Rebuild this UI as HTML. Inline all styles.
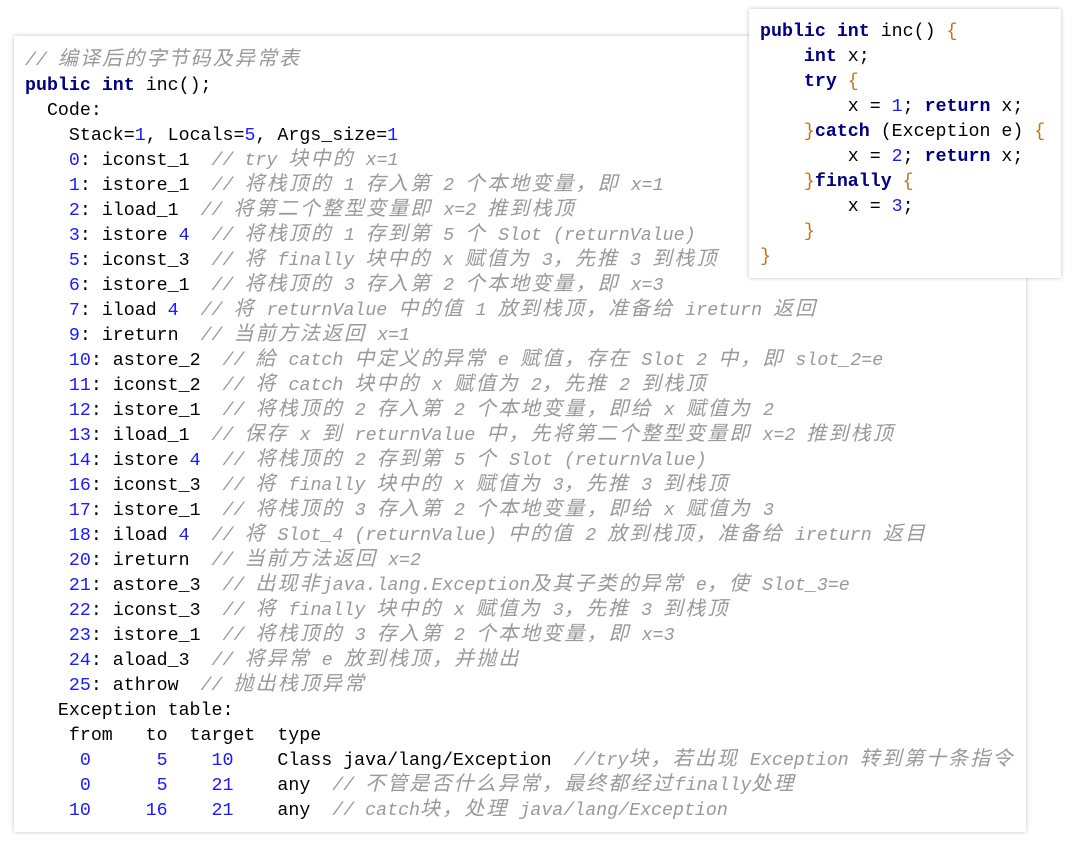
<!DOCTYPE html>
<html><head><meta charset="utf-8"><style>
body{margin:0;width:1080px;height:841px;background:#fff;overflow:hidden;position:relative;font-family:"Liberation Mono","Noto Sans CJK SC",monospace;}
.box{position:absolute;background:#fff;box-shadow:0 0 4px rgba(0,0,0,0.25);}
pre{margin:0;font-family:"Liberation Mono","Noto Sans CJK SC",monospace;font-size:18.3px;line-height:25px;color:#000;white-space:pre;}
.c{color:#999;font-style:italic;}
.z{font-size:20px;letter-spacing:2.1px;line-height:20px;}
.n{color:#1a1aff;}
.k{color:#000080;font-weight:bold;}
.b{color:#b8771f;}
</style></head><body>
<div class="box" style="left:14px;top:36px;width:1012px;height:796px;">
<pre style="position:absolute;left:11px;top:13px;"><span class="c">// 编译后的字节码及异常表</span>
<span class="k">public</span> <span class="k">int</span> inc();
  Code:
    Stack=<span class="n">1</span>, Locals=<span class="n">5</span>, Args_size=<span class="n">1</span>
    <span class="n">0</span>: iconst_1  <span class="c">// try 块中的 x=1</span>
    <span class="n">1</span>: istore_1  <span class="c">// 将栈顶的 1 存入第 2 个本地变量，即 x=1</span>
    <span class="n">2</span>: iload_1  <span class="c">// 将第二个整型变量即 x=2 推到栈顶</span>
    <span class="n">3</span>: istore <span class="n">4</span>  <span class="c">// 将栈顶的 1 存到第 5 个 Slot (returnValue)</span>
    <span class="n">5</span>: iconst_3  <span class="c">// 将 finally 块中的 x 赋值为 3，先推 3 到栈顶</span>
    <span class="n">6</span>: istore_1  <span class="c">// 将栈顶的 3 存入第 2 个本地变量，即 x=3</span>
    <span class="n">7</span>: iload <span class="n">4</span>  <span class="c">// 将 returnValue 中的值 1 放到栈顶，准备给 ireturn 返回</span>
    <span class="n">9</span>: ireturn  <span class="c">// 当前方法返回 x=1</span>
    <span class="n">10</span>: astore_2  <span class="c">// 給 catch 中定义的异常 e 赋值，存在 Slot 2 中，即 slot_2=e</span>
    <span class="n">11</span>: iconst_2  <span class="c">// 将 catch 块中的 x 赋值为 2，先推 2 到栈顶</span>
    <span class="n">12</span>: istore_1  <span class="c">// 将栈顶的 2 存入第 2 个本地变量，即给 x 赋值为 2</span>
    <span class="n">13</span>: iload_1  <span class="c">// 保存 x 到 returnValue 中，先将第二个整型变量即 x=2 推到栈顶</span>
    <span class="n">14</span>: istore <span class="n">4</span>  <span class="c">// 将栈顶的 2 存到第 5 个 Slot (returnValue)</span>
    <span class="n">16</span>: iconst_3  <span class="c">// 将 finally 块中的 x 赋值为 3，先推 3 到栈顶</span>
    <span class="n">17</span>: istore_1  <span class="c">// 将栈顶的 3 存入第 2 个本地变量，即给 x 赋值为 3</span>
    <span class="n">18</span>: iload <span class="n">4</span>  <span class="c">// 将 Slot_4 (returnValue) 中的值 2 放到栈顶，准备给 ireturn 返目</span>
    <span class="n">20</span>: ireturn  <span class="c">// 当前方法返回 x=2</span>
    <span class="n">21</span>: astore_3  <span class="c">// 出现非java.lang.Exception及其子类的异常 e，使 Slot_3=e</span>
    <span class="n">22</span>: iconst_3  <span class="c">// 将 finally 块中的 x 赋值为 3，先推 3 到栈顶</span>
    <span class="n">23</span>: istore_1  <span class="c">// 将栈顶的 3 存入第 2 个本地变量，即 x=3</span>
    <span class="n">24</span>: aload_3  <span class="c">// 将异常 e 放到栈顶，并抛出</span>
    <span class="n">25</span>: athrow  <span class="c">// 抛出栈顶异常</span>
   Exception table:
    from   to  target  type
     <span class="n">0</span>      <span class="n">5</span>    <span class="n">10</span>    Class java/lang/Exception  <span class="c">//try块，若出现 Exception 转到第十条指令</span>
     <span class="n">0</span>      <span class="n">5</span>    <span class="n">21</span>    any  <span class="c">// 不管是否什么异常，最终都经过finally处理</span>
    <span class="n">10</span>     <span class="n">16</span>    <span class="n">21</span>    any  <span class="c">// catch块，处理 java/lang/Exception</span></pre>
</div>
<div class="box" style="left:749px;top:9px;width:312px;height:269px;">
<pre style="position:absolute;left:11px;top:11px;"><span class="k">public</span> <span class="k">int</span> inc() <span class="b">{</span>
    <span class="k">int</span> x;
    <span class="k">try</span> <span class="b">{</span>
        x = <span class="n">1</span>; <span class="k">return</span> x;
    <span class="b">}</span><span class="k">catch</span> (Exception e) <span class="b">{</span>
        x = <span class="n">2</span>; <span class="k">return</span> x;
    <span class="b">}</span><span class="k">finally</span> <span class="b">{</span>
        x = <span class="n">3</span>;
    <span class="b">}</span>
<span class="b">}</span></pre>
</div>
<script>
document.querySelectorAll('.c').forEach(function(e){
  e.innerHTML=e.innerHTML.replace(/([\u3000-\u9fff\uff00-\uffef]+)/g,'<span class="z">$1</span>');
});
</script>
</body></html>
